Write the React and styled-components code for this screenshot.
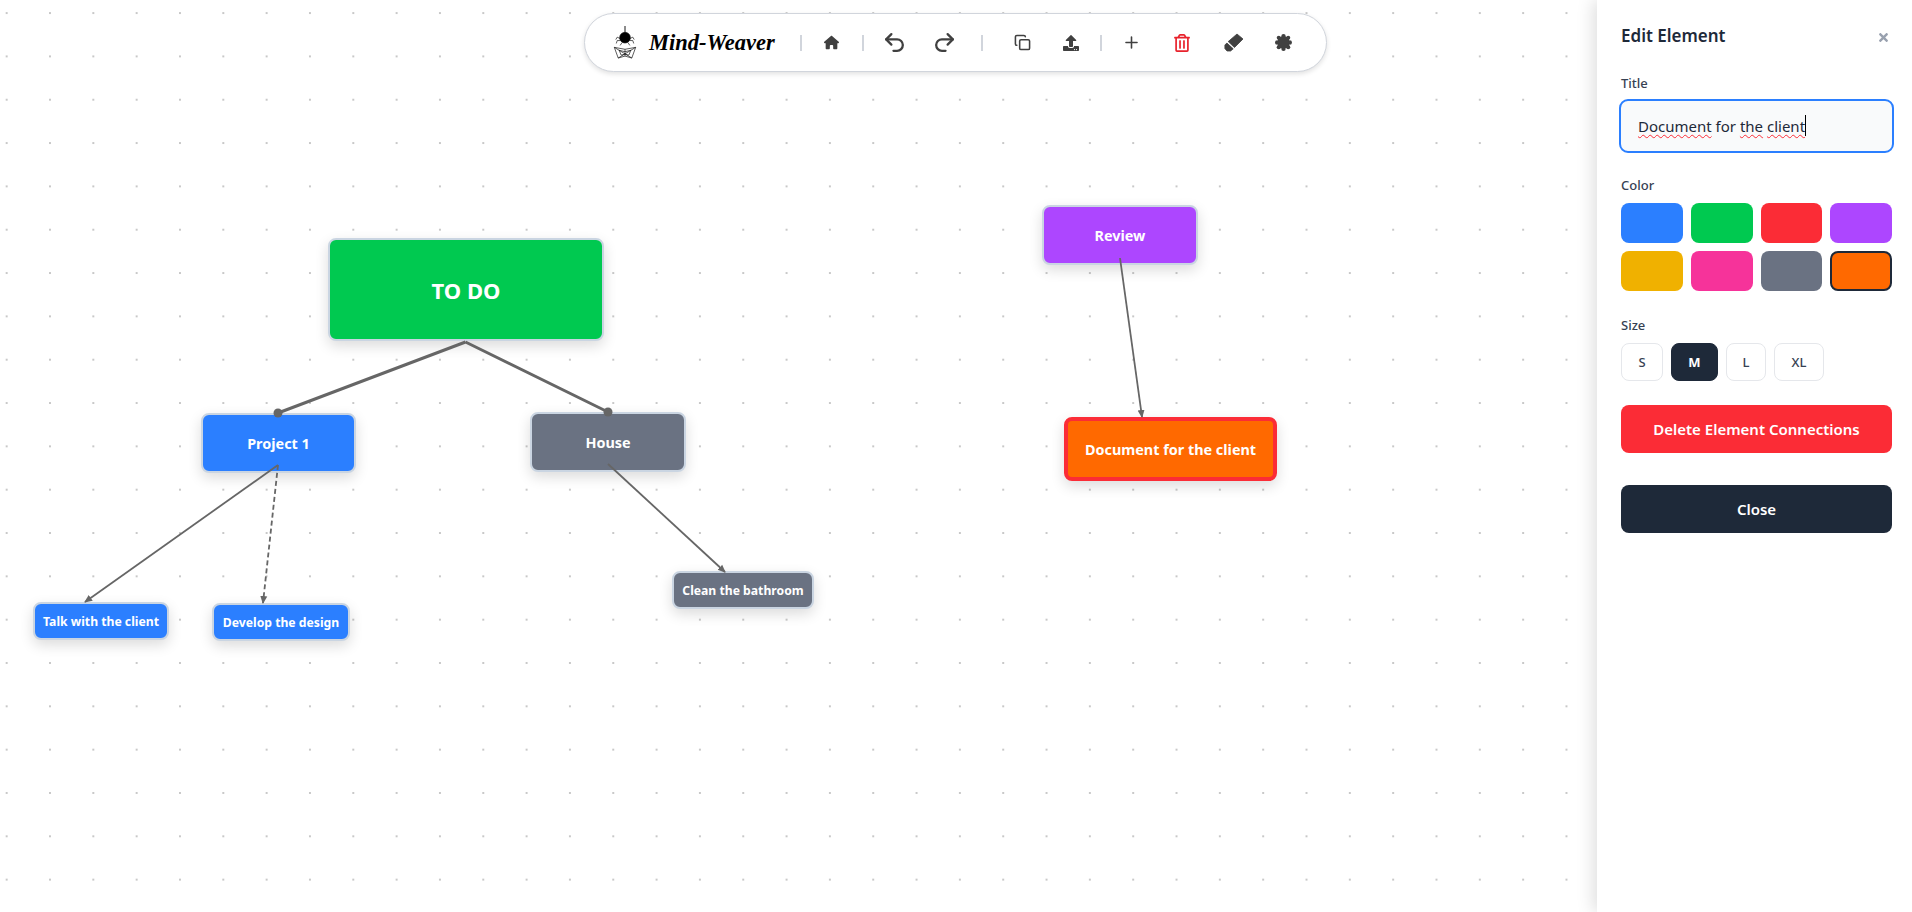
import React from "react";
import styled, { createGlobalStyle } from "styled-components";
import { FaUpload, FaRegTrashAlt, FaTimes } from "react-icons/fa";
import { FaHouse } from "react-icons/fa6";
import { LuUndo2, LuRedo2, LuCopy, LuPlus } from "react-icons/lu";

const GlobalStyle = createGlobalStyle`
  html, body { margin: 0; padding: 0; height: 100%; overflow: hidden; background: #fff; }
  body { font-family: "Noto Sans", "Open Sans", sans-serif; color: #1e2939; }
`;

const Page = styled.div`
  display: flex;
  width: 1912px;
  height: 912px;
  overflow: hidden;
`;

const Canvas = styled.main`
  position: relative;
  flex: 1;
  background-color: #fff;
  background-image: radial-gradient(circle, #c8c8c8 1px, transparent 1.2px);
  background-size: 43.33px 43.33px;
  background-position: -15px -8.6px;
`;

const Lines = styled.svg`
  position: absolute;
  inset: 0;
  width: 100%;
  height: 100%;
  z-index: 2;
  pointer-events: none;
`;

const Toolbar = styled.nav`
  position: absolute;
  top: 13px;
  left: 584px;
  z-index: 3;
  width: 743px;
  height: 59px;
  box-sizing: border-box;
  display: flex;
  align-items: center;
  background: #fff;
  border: 1px solid #d1d5dc;
  border-radius: 30px;
  box-shadow: 0 2px 5px rgba(0, 0, 0, 0.12);
  padding-left: 26px;
`;

const Brand = styled.div`
  display: flex;
  align-items: center;
  gap: 10px;
  width: 189px;
`;

const BrandName = styled.span`
  font-family: cursive;
  font-style: italic;
  font-weight: 700;
  font-size: 22.5px;
  color: #000;
  white-space: nowrap;
`;

const Divider = styled.span`
  width: 2px;
  height: 16px;
  background: #d1d5dc;
  flex: none;
`;

const Spacer = styled.span`
  width: ${(p) => p.$w}px;
  flex: none;
`;

const ToolButton = styled.button`
  width: ${(p) => p.$w}px;
  height: 32px;
  flex: none;
  padding: 0;
  display: flex;
  align-items: center;
  justify-content: center;
  border: 0;
  background: none;
  color: ${(p) => (p.$danger ? "#e8222c" : "#404040")};
  font-size: ${(p) => p.$size || 16}px;
`;

const Node = styled.div`
  position: absolute;
  left: ${(p) => p.$x}px;
  top: ${(p) => p.$y}px;
  width: ${(p) => p.$w}px;
  height: ${(p) => p.$h}px;
  box-sizing: border-box;
  display: flex;
  align-items: center;
  justify-content: center;
  background: ${(p) => p.$bg};
  border: ${(p) => (p.$selected ? "4px solid #fb2c36" : "2px solid #cad5e2")};
  border-radius: 8px;
  box-shadow: 0 5px 14px rgba(0, 0, 0, 0.14);
  color: #fff;
  font-weight: 700;
  font-size: ${(p) => p.$font}px;
  white-space: nowrap;
`;

const Panel = styled.aside`
  position: relative;
  z-index: 4;
  width: 315px;
  flex: none;
  box-sizing: border-box;
  background: #fff;
  box-shadow: -4px 0 16px rgba(0, 0, 0, 0.13);
  padding: 22px 20px 0 24px;
`;

const PanelHeader = styled.div`
  display: flex;
  align-items: center;
  justify-content: space-between;
  height: 28px;
  padding-right: 2px;
  margin-bottom: 24px;
`;

const PanelTitle = styled.h2`
  margin: 0;
  font-size: 17px;
  line-height: 26px;
  font-weight: 600;
  color: #1e2939;
`;

const CloseIcon = styled.span`
  display: flex;
  color: #99a1af;
  font-size: 13px;
  margin-top: 3px;
`;

const Label = styled.div`
  font-size: 13px;
  line-height: 18px;
  font-weight: 500;
  color: #364153;
  margin-bottom: ${(p) => p.$gap}px;
`;

const TitleField = styled.div`
  box-sizing: border-box;
  width: 274.5px;
  height: 53.5px;
  margin-left: -2px;
  margin-bottom: 23px;
  display: flex;
  align-items: center;
  padding-left: 17px;
  background: #f9fafb;
  border: 2px solid #2b7fff;
  border-radius: 9px;
  font-size: 15px;
  color: #1e2939;
`;

const FieldText = styled.span`
  white-space: pre;
`;

const Misspelled = styled.span`
  text-decoration: underline wavy #fb2c36 1px;
  text-underline-offset: 2px;
`;

const Caret = styled.span`
  display: inline-block;
  width: 1px;
  height: 21px;
  background: #000;
`;

const Swatches = styled.div`
  display: grid;
  grid-template-columns: repeat(4, 1fr);
  gap: 8px;
  width: 271px;
  margin-bottom: 25px;
`;

const Swatch = styled.button`
  height: 40px;
  padding: 0;
  box-sizing: border-box;
  background: ${(p) => p.$color};
  border: ${(p) => (p.$active ? "2px solid #1e2939" : "0")};
  border-radius: 8px;
`;

const Sizes = styled.div`
  display: flex;
  gap: 8px;
  margin-bottom: 24px;
`;

const SizeButton = styled.button`
  width: ${(p) => p.$w}px;
  height: 38px;
  padding: 0;
  box-sizing: border-box;
  font-family: inherit;
  font-size: 13px;
  font-weight: ${(p) => (p.$active ? 700 : 500)};
  color: ${(p) => (p.$active ? "#fff" : "#364153")};
  background: ${(p) => (p.$active ? "#1e2939" : "#fff")};
  border: 1px solid ${(p) => (p.$active ? "#1e2939" : "#e5e7eb")};
  border-radius: 8px;
`;

const ActionButton = styled.button`
  display: block;
  width: 271px;
  height: 48px;
  padding: 0;
  margin-bottom: 32px;
  font-family: inherit;
  font-size: 15px;
  font-weight: 600;
  color: #fff;
  background: ${(p) => p.$bg};
  border: 0;
  border-radius: 8px;
`;

const colors = ["#2b7fff", "#00c950", "#fb2c36", "#ad46ff", "#f0b100", "#f6339a", "#6a7282", "#ff6900"];
const sizes = [
  { label: "S", w: 42 },
  { label: "M", w: 47 },
  { label: "L", w: 40 },
  { label: "XL", w: 50 },
];

const nodes = [
  { text: "TO DO", x: 328, y: 238, w: 276, h: 103, bg: "#00c950", font: 22 },
  { text: "Project 1", x: 201, y: 413, w: 155, h: 60, bg: "#2b7fff", font: 14.4 },
  { text: "House", x: 530, y: 412, w: 156, h: 60, bg: "#6a7282", font: 14.4 },
  { text: "Talk with the client", x: 33, y: 602, w: 136, h: 38, bg: "#2b7fff", font: 12.2 },
  { text: "Develop the design", x: 212, y: 603, w: 138, h: 38, bg: "#2b7fff", font: 12.2 },
  { text: "Clean the bathroom", x: 672, y: 571, w: 142, h: 38, bg: "#6a7282", font: 12.2 },
  { text: "Review", x: 1042, y: 205, w: 156, h: 60, bg: "#ad46ff", font: 14.4 },
  { text: "Document for the client", x: 1064, y: 417, w: 213, h: 64, bg: "#ff6900", font: 14.4, selected: true },
];

const SpiderLogo = () => (
  <svg width="28" height="33" viewBox="0 0 28 34" fill="none" stroke="#111" strokeWidth="0.7">
    <path d="M14 0v8" strokeWidth="1" />
    <circle cx="14" cy="12" r="5.5" fill="#000" />
    <path d="M9 13 6 11.5 4.5 14M9 15 6 15 5 18M19 13 22 11.5 23.5 14M19 15 22 15 23 18M11 17l-2 3M17 17l2 3" />
    <path d="M3 22 14 24 25 22 21 33 14 31 7 33Z" />
    <path d="M14 24V31M3 22 21 33M25 22 7 33M8 25 14 26.5 20 25 18 30 14 29 10 30Z" />
  </svg>
);

const EraserIcon = () => (
  <svg width="20" height="20" viewBox="0 0 20 20" fill="currentColor" stroke="currentColor" strokeWidth="0.8" strokeLinejoin="round">
    <path d="M13 1 19 6 10.5 14.5 4.2 8.6Z" />
    <path d="M2.9 10 9.2 15.8 6.6 18H3L0.9 15.6V12Z" />
  </svg>
);

const PuzzleIcon = () => (
  <svg width="17" height="17" viewBox="0 0 17 17" fill="currentColor">
    <rect x="3" y="3" width="11" height="11" />
    <circle cx="8.5" cy="2.2" r="2.2" />
    <circle cx="14.8" cy="8.5" r="2.2" />
    <circle cx="8.5" cy="14.8" r="2.2" />
    <circle cx="2.2" cy="8.5" r="2.2" />
    <circle cx="3.8" cy="3.8" r="2.1" />
    <circle cx="13.2" cy="3.8" r="2.1" />
    <circle cx="3.8" cy="13.2" r="2.1" />
    <circle cx="13.2" cy="13.2" r="2.1" />
  </svg>
);

export default function App() {
  return (
    <Page>
      <GlobalStyle />
      <Canvas>
        <Toolbar>
          <Brand>
            <SpiderLogo />
            <BrandName>Mind-Weaver</BrandName>
          </Brand>
          <Divider />
          <ToolButton $w={58} $size={15}><FaHouse /></ToolButton>
          <Spacer $w={2} />
          <Divider />
          <ToolButton $w={60} $size={25}><LuUndo2 strokeWidth={2.2} /></ToolButton>
          <ToolButton $w={40} $size={25}><LuRedo2 strokeWidth={2.2} /></ToolButton>
          <Spacer $w={17} />
          <Divider />
          <ToolButton $w={78} $size={17}><LuCopy strokeWidth={2.2} /></ToolButton>
          <ToolButton $w={20} $size={16}><FaUpload /></ToolButton>
          <Spacer $w={19} />
          <Divider />
          <ToolButton $w={58} $size={19}><LuPlus /></ToolButton>
          <ToolButton $w={44} $size={18} $danger><FaRegTrashAlt /></ToolButton>
          <ToolButton $w={60}><EraserIcon /></ToolButton>
          <ToolButton $w={38}><PuzzleIcon /></ToolButton>
        </Toolbar>

        {nodes.map((n) => (
          <Node key={n.text} $x={n.x} $y={n.y} $w={n.w} $h={n.h} $bg={n.bg} $font={n.font} $selected={n.selected}>
            {n.text}
          </Node>
        ))}

        <Lines>
          <defs>
            <marker id="arrow" markerWidth="8" markerHeight="8" refX="7" refY="4" orient="auto" markerUnits="userSpaceOnUse">
              <path d="M0 0.5 8 4 0 7.5Z" fill="#666" />
            </marker>
          </defs>
          <path d="M465.5 342 278 413M465.5 342 608 412" stroke="#666" strokeWidth="3" />
          <circle cx="278" cy="413" r="4.5" fill="#666" />
          <circle cx="608" cy="412" r="4.5" fill="#666" />
          <path d="M278 465 85 602" stroke="#666" strokeWidth="1.8" markerEnd="url(#arrow)" />
          <path d="M278 465 263 603" stroke="#666" strokeWidth="1.8" strokeDasharray="5 3" markerEnd="url(#arrow)" />
          <path d="M608 464 725 572" stroke="#666" strokeWidth="1.8" markerEnd="url(#arrow)" />
          <path d="M1120 258 1142 417" stroke="#666" strokeWidth="1.8" markerEnd="url(#arrow)" />
        </Lines>
      </Canvas>

      <Panel>
        <PanelHeader>
          <PanelTitle>Edit Element</PanelTitle>
          <CloseIcon><FaTimes /></CloseIcon>
        </PanelHeader>

        <Label $gap={7}>Title</Label>
        <TitleField>
          <FieldText>
            <Misspelled>Document</Misspelled> for <Misspelled>the</Misspelled>{" "}
            <Misspelled>client</Misspelled>
          </FieldText>
          <Caret />
        </TitleField>

        <Label $gap={9}>Color</Label>
        <Swatches>
          {colors.map((c) => (
            <Swatch key={c} $color={c} $active={c === "#ff6900"} />
          ))}
        </Swatches>

        <Label $gap={9}>Size</Label>
        <Sizes>
          {sizes.map((s) => (
            <SizeButton key={s.label} $w={s.w} $active={s.label === "M"}>{s.label}</SizeButton>
          ))}
        </Sizes>

        <ActionButton $bg="#fb2c36">Delete Element Connections</ActionButton>
        <ActionButton $bg="#1e2939">Close</ActionButton>
      </Panel>
    </Page>
  );
}
